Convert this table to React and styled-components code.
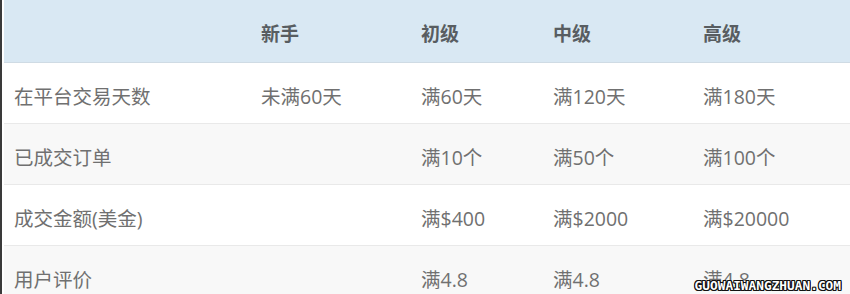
import styled, { createGlobalStyle } from "styled-components";

const GlobalStyle = createGlobalStyle`
    html, body {
        margin: 0;
        padding: 0;
        background: #ffffff;
        overflow: hidden;
    }
`;

const columns = "247px 160px 132px 150px 1fr";

const levels = ["新手", "初级", "中级", "高级"];

const rows = [
    { label: "在平台交易天数", values: ["未满60天", "满60天", "满120天", "满180天"] },
    { label: "已成交订单", values: ["", "满10个", "满50个", "满100个"] },
    { label: "成交金额(美金)", values: ["", "满$400", "满$2000", "满$20000"] },
    { label: "用户评价", values: ["", "满4.8", "满4.8", "满4.8"] },
];

const Page = styled.div`
    position: relative;
    width: 850px;
    height: 294px;
    overflow: hidden;
    box-sizing: border-box;
    border-left: 2px solid #3a3a3a;
    padding-left: 2px;
    font-family: "Open Sans", "Noto Sans CJK SC", sans-serif;
`;

const Table = styled.div`
    display: flex;
    flex-direction: column;
`;

const HeaderRow = styled.div`
    display: grid;
    grid-template-columns: ${columns};
    height: 63px;
    align-items: center;
    background: #d9e8f3;
    border-bottom: 1px solid #cfdbe4;
    box-sizing: border-box;
`;

const HeaderCell = styled.div`
    padding-left: 10px;
    padding-top: 4px;
    font-size: 19px;
    font-weight: 700;
    color: #585d61;
`;

const BodyRow = styled.div`
    display: grid;
    grid-template-columns: ${columns};
    height: 61px;
    flex: 0 0 61px;
    align-items: center;
    background: ${({ $striped }) => ($striped ? "#f8f8f8" : "#ffffff")};
    border-bottom: 1px solid #e9e9e9;
    box-sizing: border-box;
`;

const Cell = styled.div`
    padding-left: 10px;
    padding-top: 5px;
    font-size: 19.5px;
    color: #707070;
    white-space: nowrap;
`;

const Watermark = styled.div`
    position: absolute;
    right: 9px;
    bottom: 2px;
    font-family: "DejaVu Sans Mono", monospace;
    font-weight: 700;
    font-size: 12.8px;
    line-height: 12px;
    color: #ffffff;
    text-shadow:
        1px 0 0 #111,
        -1px 0 0 #111,
        0 1px 0 #111,
        0 -1px 0 #111,
        1px 1px 0 #111,
        -1px -1px 0 #111,
        1px -1px 0 #111,
        -1px 1px 0 #111;
`;

export default function App() {
    return (
        <>
            <GlobalStyle />
            <Page>
                <Table>
                    <HeaderRow>
                        <HeaderCell />
                        {levels.map((level) => (
                            <HeaderCell key={level}>{level}</HeaderCell>
                        ))}
                    </HeaderRow>
                    {rows.map((row, i) => (
                        <BodyRow key={row.label} $striped={i % 2 === 1}>
                            <Cell>{row.label}</Cell>
                            {row.values.map((value, j) => (
                                <Cell key={j}>{value}</Cell>
                            ))}
                        </BodyRow>
                    ))}
                </Table>
                <Watermark>GUOWAIWANGZHUAN.COM</Watermark>
            </Page>
        </>
    );
}
